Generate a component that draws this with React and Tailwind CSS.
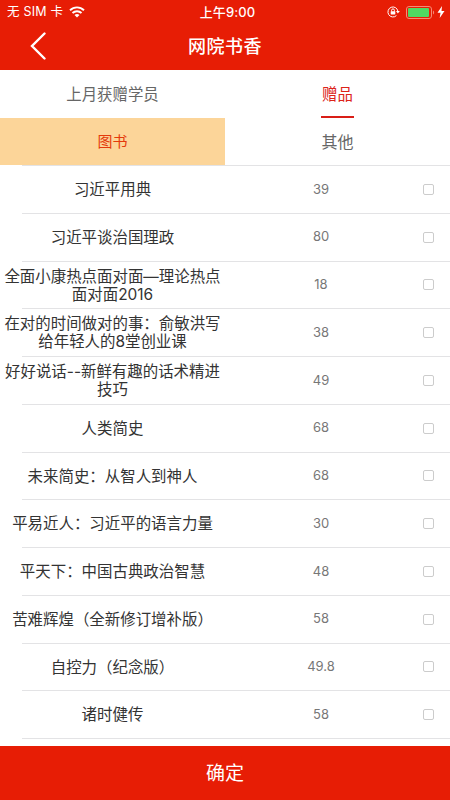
const books = [
  { lines: ['习近平用典'], price: '39' },
  { lines: ['习近平谈治国理政'], price: '80' },
  { lines: ['全面小康热点面对面—理论热点', '面对面2016'], price: '18' },
  { lines: ['在对的时间做对的事：俞敏洪写', '给年轻人的8堂创业课'], price: '38' },
  { lines: ['好好说话--新鲜有趣的话术精进', '技巧'], price: '49' },
  { lines: ['人类简史'], price: '68' },
  { lines: ['未来简史：从智人到神人'], price: '68' },
  { lines: ['平易近人：习近平的语言力量'], price: '30' },
  { lines: ['平天下：中国古典政治智慧'], price: '48' },
  { lines: ['苦难辉煌（全新修订增补版）'], price: '58' },
  { lines: ['自控力（纪念版）'], price: '49.8' },
  { lines: ['诸时健传'], price: '58' },
];

function WifiIcon() {
  return (
    <svg width="16" height="12" viewBox="0 0 16 12" fill="none" stroke="currentColor" strokeWidth="1.9">
      <path d="M1 4.300C5 .4 11 .4 15 4.300" />
      <path d="M3.500 7C6 4.600 10 4.600 12.500 7" />
      <path d="M8 11.500 5.500 9c1.400-1.300 3.600-1.300 5 0Z" fill="currentColor" stroke="none" />
    </svg>
  );
}

function RotationLockIcon() {
  return (
    <svg width="13" height="12" viewBox="0 0 13 12" fill="none" stroke="currentColor" strokeWidth="1">
      <path d="M9.400 9.600A5 5 0 1 1 10.900 5.200" />
      <path d="M9 5h3.800L10.900 7.400Z" fill="currentColor" stroke="none" />
      <path d="M4.600 5.500V4.300a1.400 1.400 0 0 1 2.800 0v1.200" />
      <rect x="3.700" y="5.200" width="4.600" height="3.300" rx=".4" fill="currentColor" stroke="none" />
    </svg>
  );
}

function BatteryIcon() {
  return (
    <svg width="29" height="13" viewBox="0 0 29 13" fill="none">
      <rect x=".5" y=".5" width="25" height="12" rx="2.500" stroke="#f58a75" strokeWidth="1" />
      <rect x="2" y="2" width="21" height="9" rx="1" fill="#4fd862" />
      <path d="M27 4.500c1.500.6 1.500 3.400 0 4Z" fill="#f58a75" />
    </svg>
  );
}

function StatusBar() {
  return (
    <div className="grid h-6 grid-cols-3 items-center pl-[7px] pr-[5px] text-[12.500px] leading-none">
      <div className="flex items-center gap-[6px]">
        <span className="pt-px tracking-[0.2px]">无 SIM 卡</span>
        <WifiIcon />
      </div>
      <span className="pl-[3px] text-center text-[13px] font-medium tracking-[0.1px]">上午9:00</span>
      <div className="flex items-center justify-end">
        <RotationLockIcon />
        <span className="ml-[6px]"><BatteryIcon /></span>
        <svg className="ml-[2px]" width="8" height="12" viewBox="0 0 8 12" fill="currentColor">
          <path d="M5 0 .5 6.700h3L2.700 12 7.500 5h-3Z" />
        </svg>
      </div>
    </div>
  );
}

export default function App() {
  return (
    <div
      lang="zh-CN"
      className="flex h-[800px] w-[450px] flex-col overflow-hidden bg-white font-[Inter,'Noto_Sans_CJK_SC',sans-serif]"
    >
      <header className="h-[70px] shrink-0 bg-[#e71d05] text-white">
        <StatusBar />
        <div className="grid h-11 grid-cols-3 items-center">
          <button className="pl-[30px]" aria-label="返回">
            <svg width="16" height="28" viewBox="0 0 16 28" fill="none" stroke="currentColor" strokeWidth="2.400" strokeLinecap="round">
              <path d="M14.500 1.500 2 14l12.500 12.500" />
            </svg>
          </button>
          <h1 className="pt-px text-center text-[18px] font-medium leading-none tracking-[0.5px]">网院书香</h1>
        </div>
      </header>

      <nav className="grid h-12 shrink-0 grid-cols-2 text-[15.400px] leading-none">
        <div className="flex items-center justify-center pt-[2px] text-[#666]">上月获赠学员</div>
        <div className="flex justify-center">
          <span className="flex h-12 w-[33px] items-center justify-center whitespace-nowrap border-b-2 border-[#d91e17] pt-[3px] text-[#dc2419]">赠品</span>
        </div>
      </nav>
      <div className="grid h-[47px] shrink-0 grid-cols-2 leading-none">
        <div className="flex items-center justify-center bg-[#fcd599] text-[15px] text-[#e43a0c]">图书</div>
        <div className="flex items-center justify-center text-[16px] text-[#666]">其他</div>
      </div>

      <main className="min-h-0 flex-1 overflow-hidden">
        <div className="ml-[22px] h-px bg-[#e3e3e5]" />
        {books.map((book) => (
          <div key={book.lines[0]} className="flex h-[47.750px] flex-col">
            <div className="flex flex-1 items-center">
              <div className="w-[225px] whitespace-nowrap pt-[1.500px] text-center text-[15.450px] leading-[18px] text-[#333]">
                {book.lines.map((line) => (
                  <div key={line}>{line}</div>
                ))}
              </div>
              <div className="w-[192px] text-center text-[13px] text-[#777]">{book.price}</div>
              <div className="ml-[5.500px] size-[11px] rounded-[2px] border border-[#ccc]" />
            </div>
            <div className="ml-[22px] h-px bg-[#e3e3e5]" />
          </div>
        ))}
      </main>

      <button className="flex h-[54px] shrink-0 items-center justify-center bg-[#e71d05] text-[19px] leading-none text-white">
        确定
      </button>
    </div>
  );
}
